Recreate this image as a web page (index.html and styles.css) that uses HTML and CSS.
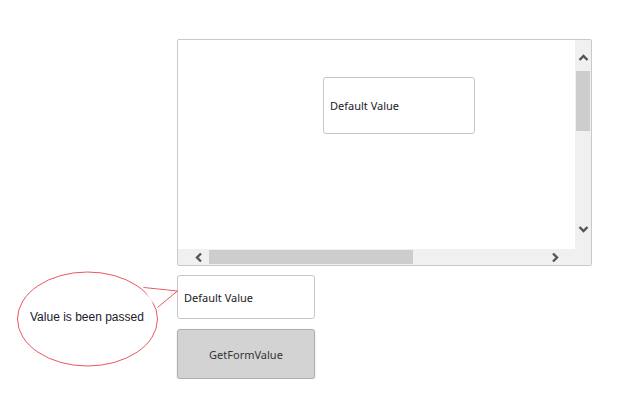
FILE: index.html
```html
<!DOCTYPE html>
<html lang="en">
<head>
  <meta charset="UTF-8">
  <meta name="viewport" content="width=device-width, initial-scale=1.0">
  <title>Form Value</title>
  <link rel="stylesheet" href="styles.css">
</head>
<body>
<div class="page">
  <div class="viewer">
    <div class="viewer-content">
      <div class="field field-big">Default Value</div>
    </div>

    <div class="vscroll">
      <div class="arrow arrow-up">
        <svg width="11" height="7" viewBox="0 0 11 7"><polyline points="1.5,6 5.5,2 9.5,6" /></svg>
      </div>
      <div class="vthumb"></div>
      <div class="spacer"></div>
      <div class="arrow arrow-down">
        <svg width="11" height="7" viewBox="0 0 11 7"><polyline points="1.5,1 5.5,5 9.5,1" /></svg>
      </div>
    </div>

    <div class="hscroll">
      <div class="arrow arrow-left">
        <svg width="7" height="11" viewBox="0 0 7 11"><polyline points="6,1.5 2,5.5 6,9.5" /></svg>
      </div>
      <div class="hthumb"></div>
      <div class="spacer"></div>
      <div class="arrow arrow-right">
        <svg width="7" height="11" viewBox="0 0 7 11"><polyline points="1,1.5 5,5.5 1,9.5" /></svg>
      </div>
    </div>
    <div class="corner"></div>
  </div>

  <div class="lower">
    <div class="field field-small">Default Value</div>
    <button class="get-btn">GetFormValue</button>

    <!-- annotation callout -->
    <div class="callout">
      <svg width="180" height="100" viewBox="0 0 180 100">
        <path d="M143.5 18.5 L177.5 22 L157.5 38.5" />
        <ellipse cx="87.5" cy="50" rx="70" ry="47" />
        <path class="mask" d="M144 19.5 L175 22.5 L156.5 37.5 L150 30 Z" />
      </svg>
      <span class="callout-text">Value is been passed</span>
    </div>
  </div>
</div>
</body>
</html>
```

FILE: styles.css
```css
body {
  margin: 0;
  background: #fff;
  font-family: "Noto Sans", "Open Sans", sans-serif;
  font-size: 11px;
  color: #1a1a28;
}

.page {
  padding: 39px 0 0 177px;
}

.viewer {
  width: 415px;
  height: 227px;
  box-sizing: border-box;
  border: 1px solid #c9c9c9;
  border-radius: 2px;
  display: grid;
  grid-template-columns: 1fr 16px;
  grid-template-rows: 1fr 16px;
  background: #fff;
}

.viewer-content {
  padding: 37px 0 0 145px;
}

.field {
  box-sizing: border-box;
  border: 1px solid #c6c6c6;
  border-radius: 3px;
  background: #fff;
  display: flex;
  align-items: center;
  padding-left: 6px;
}

.field-big {
  width: 152px;
  height: 57px;
}

.vscroll {
  background: #f0f0f0;
  display: flex;
  flex-direction: column;
}

.hscroll {
  background: #f0f0f0;
  display: flex;
}

.corner {
  background: #f0f0f0;
}

.arrow {
  display: flex;
  align-items: center;
  justify-content: center;
}

.arrow svg polyline {
  fill: none;
  stroke: #555;
  stroke-width: 2.4;
}

.arrow-up {
  height: 31px;
  padding-top: 4px;
  box-sizing: border-box;
}

.vthumb {
  height: 60px;
  margin: 0 1px;
  background: #cdcdcd;
}

.spacer {
  flex: 1;
}

.arrow-down {
  height: 37px;
  padding-bottom: 3px;
  box-sizing: border-box;
}

.arrow-left {
  width: 31px;
  padding-left: 9px;
  box-sizing: border-box;
}

.hthumb {
  width: 204px;
  margin: 1px 0;
  background: #cdcdcd;
}

.arrow-right {
  width: 36px;
  padding-right: 4px;
  box-sizing: border-box;
}

.lower {
  position: relative;
  padding-top: 9px;
}

.field-small {
  width: 138px;
  height: 44px;
}

.get-btn {
  display: block;
  margin-top: 10px;
  width: 138px;
  height: 50px;
  background: #d3d3d3;
  border: 1px solid #aeaeae;
  border-radius: 3px;
  box-shadow: 0 1px 2px rgba(0, 0, 0, 0.15);
  font-family: "Noto Sans", "Open Sans", sans-serif;
  font-size: 11px;
  color: #333;
  padding: 0;
}

.callout {
  position: absolute;
  left: -177px;
  top: 3px;
  width: 180px;
  height: 100px;
}

.callout svg {
  display: block;
}

.callout ellipse,
.callout path {
  fill: #fff;
  stroke: #e8585f;
  stroke-width: 1;
}

.callout path.mask {
  stroke: none;
}

.callout-text {
  position: absolute;
  left: 30px;
  top: 41px;
  font-family: "Liberation Sans", sans-serif;
  font-size: 12px;
  color: #1a1a2a;
}
```
